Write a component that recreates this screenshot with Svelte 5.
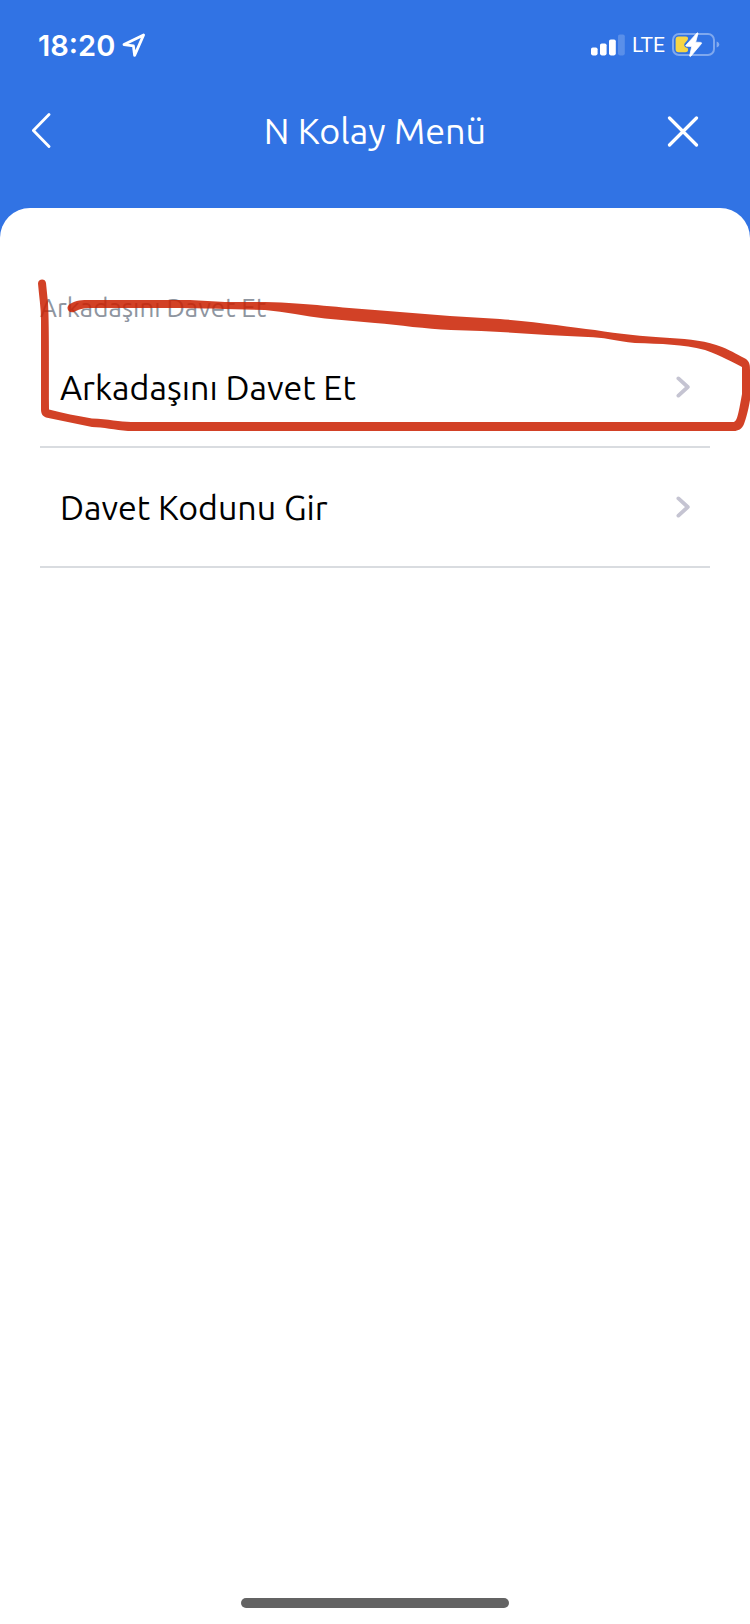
<script lang="ts">
  const title = 'N Kolay Menü';
  const sectionTitle = 'Arkadaşını Davet Et';

  const menuItems = [
    { label: 'Arkadaşını Davet Et', href: '#davet-et' },
    { label: 'Davet Kodunu Gir', href: '#davet-kodu' }
  ];

  const goBack = () => {
    history.back();
  };

  const closeMenu = () => {
    window.close();
  };
</script>

<div class="screen">
  <div class="status-bar">
    <div class="status-left">
      <span class="time">18:20</span>
      <svg width="24" height="24" viewBox="0 0 24 24" fill="none" stroke="#fff" stroke-width="2.8" stroke-linejoin="round">
        <path d="M21.600 2 L2 11.600 L11.400 12.800 L12.600 22.400 Z" />
      </svg>
    </div>
    <div class="status-right">
      <svg width="34" height="22" viewBox="0 0 34 22" fill="#fff">
        <rect x="0" y="13.4" width="6.6" height="8" rx="1.8" />
        <rect x="9" y="9.4" width="6.6" height="12" rx="1.8" />
        <rect x="18" y="5.4" width="6.8" height="16" rx="1.8" />
        <rect x="27" y="0.4" width="6.8" height="21" rx="1.8" opacity="0.2" />
      </svg>
      <span class="network">LTE</span>
      <svg width="48" height="26" viewBox="0 0 48 26">
        <rect x="1" y="2" width="41" height="21" rx="6" fill="none" stroke="#fff" stroke-opacity="0.38" stroke-width="2" />
        <path d="M44.600 9.400 C48.200 10.400 48.200 14.600 44.600 15.600 Z" fill="#fff" fill-opacity="0.4" />
        <path d="M6.600 4.600 H13.600 C16 4.600 16.600 6.400 15.600 8 L12.400 11.800 C11.600 14 13 15.600 15.600 16 C16.600 18 16 20.200 13.600 20.200 H6.600 C4.600 20.200 3.600 19 3.600 17.200 V7.600 C3.600 5.800 4.600 4.600 6.600 4.600 Z" fill="#f7d544" />
        <path d="M25 1 L13.800 13.400 Q13.600 14.200 14.400 14.200 L19.800 14.400 L17.600 24 Q18 25 19 24 L29.600 11.400 Q29.600 10.400 28.600 10.400 L23.600 10.200 L26 1.400 Q25.800 0.400 25 1 Z" fill="#fff" stroke="#fff" stroke-width="0.8" stroke-linejoin="round" />
      </svg>
    </div>
  </div>

  <header class="nav-bar">
    <button class="nav-btn back" aria-label="Geri" on:click={goBack}>
      <svg width="20" height="36" viewBox="0 0 20 36" fill="none" stroke="#fff" stroke-width="2.8" stroke-linecap="round" stroke-linejoin="round">
        <path d="M17 2.600 L1.400 18.600 L17 34.600" />
      </svg>
    </button>
    <h1>{title}</h1>
    <button class="nav-btn close" aria-label="Kapat" on:click={closeMenu}>
      <svg width="34" height="34" viewBox="0 0 34 34" fill="none" stroke="#fff" stroke-width="3.2" stroke-linecap="round">
        <path d="M3.500 5 L30.500 32 M30.500 5 L3.500 32" />
      </svg>
    </button>
  </header>

  <main class="sheet">
    <h2>{sectionTitle}</h2>
    <ul class="menu">
      {#each menuItems as item}
        <li>
          <a href={item.href}>
            <span>{item.label}</span>
            <svg width="16" height="22" viewBox="0 0 16 22" fill="none" stroke="#c5c4d2" stroke-width="3.8" stroke-linecap="round" stroke-linejoin="round">
              <path d="M4.400 2.400 L13.800 11 L4.400 19.600" />
            </svg>
          </a>
        </li>
      {/each}
    </ul>

    <!-- hand-drawn marker around the first item -->
    <svg class="marker" viewBox="0 272 750 164" fill="#cb2001" aria-hidden="true">
      <path
        d="M38 283.500 C38 278.500 45.500 278 46 283 L48 303 C49 320 49 350 49 409.500
        C62 413 78 416 92 418.500 C108 419 120 422 131 422 L733 422 C737 422 738 416 742 394
        L742 367 C732 362 722 356 705 350 C682 344 662 344 635 343 C616 341 602 337 588 337
        C540 335 500 331 451 330 C425 329 400 325 375 323 L325 318.500 C305 316 285 312 265 310
        L225 309 C190 308 150 308 90 308 C82 308 78 310 74 312 C68 314 65 307 70 304
        C76 300 82 300 90 300 L190 300 L225 302 L265 302 C310 303 340 308 375 310
        L450 316 L500 319 C540 322 570 327 595 330 C620 334 640 336 670 338
        C690 339 707 341 722 347 C732 351 740 356 746 359 C750 362 750 366 750 370
        L750 400 C748 412 746 418 744 424 C742 429 738 431 734 431 L128 431
        C115 430 103 427 92 427 L46 417.500 C42 416 41 413 41 409 L41 320 C41 308 39 296 38 283.500 Z"
      />
    </svg>
  </main>

  <div class="home-indicator"></div>
</div>

<style>
  :global(body) {
    margin: 0;
    background: #fff;
  }

  .screen {
    display: flex;
    flex-direction: column;
    min-height: 100vh;
    background: #3173e4;
    font-family: Ubuntu, "Noto Sans", "Open Sans", sans-serif;
    position: relative;
  }

  .status-bar {
    display: flex;
    justify-content: space-between;
    align-items: center;
    height: 90px;
    padding: 0 30px 0 38px;
    color: #fff;
    font-family: Inter, "Liberation Sans", sans-serif;
  }

  .status-left,
  .status-right {
    display: flex;
    align-items: center;
    gap: 7px;
  }

  .time {
    font-size: 29px;
    font-weight: 600;
  }

  .network {
    font-family: Roboto, sans-serif;
    font-size: 21px;
  }

  .nav-bar {
    display: grid;
    grid-template-columns: 84px 1fr 84px;
    align-items: center;
    height: 118px;
    padding-bottom: 38px;
    box-sizing: border-box;
    color: #fff;
  }

  h1 {
    margin: 0;
    font-size: 36px;
    font-weight: 400;
    text-align: center;
  }

  .nav-btn {
    display: flex;
    align-items: center;
    height: 80px;
    padding: 0;
    border: none;
    background: none;
    cursor: pointer;
  }

  .nav-btn.back {
    padding-left: 32px;
  }

  .nav-btn.close {
    justify-content: flex-start;
  }

  .sheet {
    flex: 1;
    position: relative;
    padding: 80px 40px 60px;
    background: #fff;
    border-radius: 30px 30px 0 0;
  }

  h2 {
    margin: 0;
    color: #8e959f;
    font-size: 26px;
    font-weight: 400;
    line-height: 40px;
  }

  .menu {
    margin: 0;
    padding: 0;
    list-style: none;
  }

  .menu li {
    border-bottom: 2px solid #d9dce0;
  }

  .menu a {
    display: flex;
    justify-content: space-between;
    align-items: center;
    height: 118px;
    padding: 0 20px;
    color: #000;
    font-size: 34px;
    text-decoration: none;
  }

  .marker {
    position: absolute;
    top: 64px;
    left: 0;
    width: 100%;
    opacity: 0.85;
    pointer-events: none;
  }

  .home-indicator {
    position: fixed;
    bottom: 16px;
    left: 50%;
    width: 268px;
    height: 10px;
    margin-left: -134px;
    border-radius: 5px;
    background: #636363;
  }
</style>
